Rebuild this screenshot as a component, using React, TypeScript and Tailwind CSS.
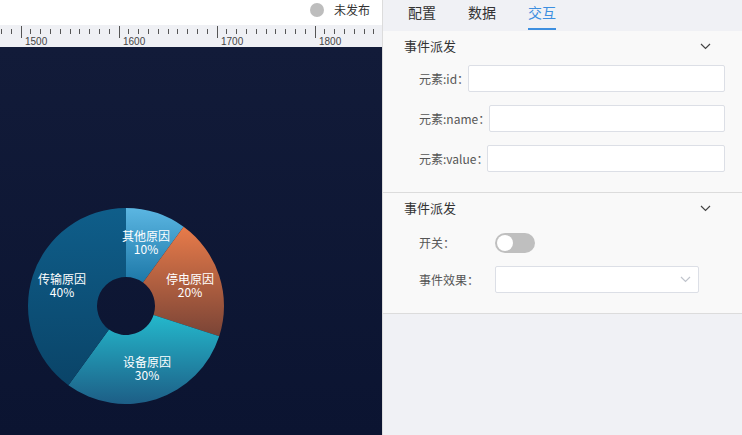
import React from 'react';

interface Slice {
  name: string;
  pct: number;
  from: string;
  to: string;
  lx: string;
  ly: string;
}

// lx / ly: label box position inside the 196px chart box
const slices: Slice[] = [
  { name: '其他原因', pct: 10, from: '#5bb6e2', to: '#1d78a8', lx: 'left-[93px]', ly: 'top-[21px]' },
  { name: '停电原因', pct: 20, from: '#e87b4a', to: '#7a4436', lx: 'left-[137px]', ly: 'top-[64px]' },
  { name: '设备原因', pct: 30, from: '#24b8cc', to: '#1d5e86', lx: 'left-[94px]', ly: 'top-[147px]' },
  { name: '传输原因', pct: 40, from: '#0f5e8a', to: '#0a4468', lx: 'left-[9px]', ly: 'top-[64px]' },
];

const CX = 98;
const CY = 98;
const R = 98;
const RI = 29;

const pt = (r: number, deg: number) => {
  const a = (deg * Math.PI) / 180;
  return [CX + r * Math.sin(a), CY - r * Math.cos(a)];
};

const arcPath = (start: number, end: number) => {
  const large = end - start > 180 ? 1 : 0;
  const [x1, y1] = pt(R, start);
  const [x2, y2] = pt(R, end);
  const [x3, y3] = pt(RI, end);
  const [x4, y4] = pt(RI, start);
  return `M${x1} ${y1} A${R} ${R} 0 ${large} 1 ${x2} ${y2} L${x3} ${y3} A${RI} ${RI} 0 ${large} 0 ${x4} ${y4} Z`;
};

const PieChart = () => {
  let acc = 0;
  return (
    <div className="relative w-[196px] h-[196px]">
      <svg width="196" height="196" viewBox="0 0 196 196" className="block">
        <defs>
          {slices.map((s, i) => (
            <linearGradient key={i} id={`g${i}`} x1="0" y1="0" x2="0" y2="1">
              <stop offset="0%" stopColor={s.from} />
              <stop offset="100%" stopColor={s.to} />
            </linearGradient>
          ))}
        </defs>
        {slices.map((s, i) => {
          const start = acc * 3.6;
          acc += s.pct;
          const end = acc * 3.6;
          return <path key={i} d={arcPath(start, end)} fill={`url(#g${i})`} />;
        })}
      </svg>
      {slices.map((s) => (
        <div
          key={s.name}
          className={`absolute ${s.lx} ${s.ly} w-[50px] flex flex-col items-center text-[12px] leading-[13px] text-white`}
        >
          <span>{s.name}</span>
          <span>{s.pct}%</span>
        </div>
      ))}
    </div>
  );
};

const Ruler = () => {
  const ticks: React.ReactElement[] = [];
  for (let i = -2; i < 38; i++) {
    const x = 21 + i * 9.8;
    const major = i % 10 === 0;
    ticks.push(
      <line
        key={i}
        x1={x}
        x2={x}
        y1={major ? 1 : 4}
        y2={major ? 13 : 9}
        stroke="#555"
        strokeWidth="1"
        shapeRendering="crispEdges"
      />
    );
  }
  const labels = [1500, 1600, 1700, 1800];
  return (
    <svg width="382" height="22" className="block">
      {ticks}
      {labels.map((l, i) => (
        <text
          key={l}
          x={25 + i * 98}
          y={20}
          fontSize="10"
          fill="#444"
          fontFamily="'Liberation Sans', Arial, sans-serif"
        >
          {l}
        </text>
      ))}
    </svg>
  );
};

const Chevron = ({ className }: { className?: string }) => (
  <svg width="11" height="7" viewBox="0 0 11 7" className={className}>
    <path d="M1 1 L5.5 5.5 L10 1" fill="none" stroke="currentColor" strokeWidth="1.2" />
  </svg>
);

const SectionHeader = () => (
  <div className="h-[30px] flex items-center justify-between pl-[21px] pr-[31px] text-[13px] text-[#333]">
    <span>事件派发</span>
    <Chevron className="text-[#444]" />
  </div>
);

const InputRow = ({ label }: { label: string }) => (
  <div className="flex items-center h-[27px] pl-[36px] pr-[17px]">
    <span className="text-[12px] text-[#555] -mr-[1px] whitespace-nowrap">{label}</span>
    <div className="flex-1 h-[27px] bg-white border border-[#dcdfe6] rounded-[2px]" />
  </div>
);

export default function App() {
  return (
    <div className="w-[742px] h-[435px] flex overflow-hidden font-['Noto_Sans_CJK_SC',sans-serif]">
      <div className="w-[382px] flex flex-col">
        <div className="h-[25px] bg-white flex items-center justify-end pr-[12px]">
          <span className="w-[14px] h-[14px] rounded-full bg-[#bdbdbd] mr-[10px] -mt-[6px]" />
          <span className="text-[12px] text-[#333] -mt-[6px]">未发布</span>
        </div>
        <div className="h-[22px] bg-[#eff0f4]">
          <Ruler />
        </div>
        <div className="flex-1 relative bg-gradient-to-b from-[#121b39] to-[#0b1431]">
          <div className="absolute left-[28px] top-[161px]">
            <PieChart />
          </div>
        </div>
      </div>
      <div className="w-[360px] flex flex-col border-l border-[#dcdcdc] bg-[#f0f1f5]">
        <div className="h-[31px] flex items-end pl-[25px] gap-[32px] text-[14px] text-[#333]">
          <div className="h-full flex items-center pb-[6px]">配置</div>
          <div className="h-full flex items-center pb-[6px]">数据</div>
          <div className="h-full flex flex-col items-center justify-center relative text-[#3d8fe0]">
            <span className="pb-[6px]">交互</span>
            <span className="absolute bottom-[1px] left-0 right-0 h-[2px] bg-[#3d8fe0]" />
          </div>
        </div>
        <div className="bg-[#f9f9f9] border-b border-[#dcdcdc] pb-[20px]">
          <SectionHeader />
          <div className="flex flex-col gap-[13px] pt-[4px]">
            <InputRow label="元素:id：" />
            <InputRow label="元素:name：" />
            <InputRow label="元素:value：" />
          </div>
        </div>
        <div className="bg-[#f9f9f9] border-b border-[#dcdcdc] pb-[20px]">
          <SectionHeader />
          <div className="flex flex-col gap-[10px] pt-[6px]">
            <div className="flex items-center h-[27px] pl-[36px]">
              <span className="w-[76px] text-[12px] text-[#555]">开关：</span>
              <div className="w-[40px] h-[20px] rounded-full bg-[#bfbfbf] flex items-center pl-[2px]">
                <div className="w-[16px] h-[16px] rounded-full bg-white" />
              </div>
            </div>
            <div className="flex items-center h-[27px] pl-[36px]">
              <span className="w-[76px] text-[12px] text-[#555]">事件效果：</span>
              <div className="w-[204px] h-[27px] bg-white border border-[#dcdfe6] rounded-[2px] flex items-center justify-end pr-[7px]">
                <Chevron className="text-[#c0c4cc]" />
              </div>
            </div>
          </div>
        </div>
      </div>
    </div>
  );
}
